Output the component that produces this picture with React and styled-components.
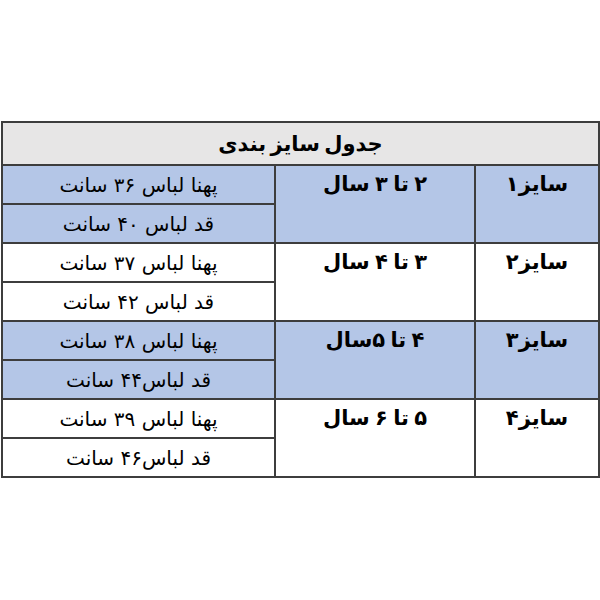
import React from "react";
import styled, { createGlobalStyle } from "styled-components";

const GlobalStyle = createGlobalStyle`
  html, body {
    margin: 0;
    padding: 0;
    background: #ffffff;
  }
  body {
    font-family: "DejaVu Sans", "Noto Sans", sans-serif;
  }
`;

const Page = styled.div`
  width: 600px;
  height: 600px;
  padding-top: 121px;
  box-sizing: border-box;
  direction: rtl;
`;

const Table = styled.table`
  width: 599px;
  border-collapse: collapse;
  table-layout: fixed;
  color: #000;
`;

const TitleCell = styled.th`
  height: 41px;
  background: #e7e6e6;
  border: 2px solid #3d3d3d;
  font-size: 21px;
  font-weight: bold;
  word-spacing: -3px;
  text-align: center;
  vertical-align: middle;
  padding: 0;
`;

const SizeCell = styled.td`
  background: ${(p) => (p.$blue ? "#b4c6e7" : "#ffffff")};
  border: 2px solid #3d3d3d;
  font-size: 21px;
  font-weight: bold;
  word-spacing: ${(p) => (p.$tight ? "-2px" : "0")};
  text-align: center;
  vertical-align: top;
  padding: 6px 0 0;
`;

const DetailCell = styled.td`
  height: 37px;
  background: ${(p) => (p.$blue ? "#b4c6e7" : "#ffffff")};
  border: 2px solid #3d3d3d;
  font-size: 20px;
  text-align: center;
  vertical-align: middle;
  padding: 0;
`;

const rows = [
  { size: "سایز۱", age: "۲ تا ۳ سال", width: "پهنا لباس ۳۶ سانت", length: "قد لباس ۴۰ سانت", blue: true },
  { size: "سایز۲", age: "۳ تا ۴ سال", width: "پهنا لباس ۳۷ سانت", length: "قد لباس ۴۲ سانت", blue: false },
  { size: "سایز۳", age: "۴ تا ۵سال", width: "پهنا لباس ۳۸ سانت", length: "قد لباس۴۴ سانت", blue: true },
  { size: "سایز۴", age: "۵ تا ۶ سال", width: "پهنا لباس ۳۹ سانت", length: "قد لباس۴۶ سانت", blue: false },
];

export default function App() {
  return (
    <>
      <GlobalStyle />
      <Page>
        <Table>
          <colgroup>
            <col style={{ width: "124px" }} />
            <col style={{ width: "200px" }} />
            <col />
          </colgroup>
          <thead>
            <tr>
              <TitleCell colSpan={3}>جدول سایز بندی</TitleCell>
            </tr>
          </thead>
          <tbody>
            {rows.map((r) => (
              <React.Fragment key={r.size}>
                <tr>
                  <SizeCell $blue={r.blue} rowSpan={2}>{r.size}</SizeCell>
                  <SizeCell $blue={r.blue} $tight rowSpan={2}>{r.age}</SizeCell>
                  <DetailCell $blue={r.blue}>{r.width}</DetailCell>
                </tr>
                <tr>
                  <DetailCell $blue={r.blue}>{r.length}</DetailCell>
                </tr>
              </React.Fragment>
            ))}
          </tbody>
        </Table>
      </Page>
    </>
  );
}
